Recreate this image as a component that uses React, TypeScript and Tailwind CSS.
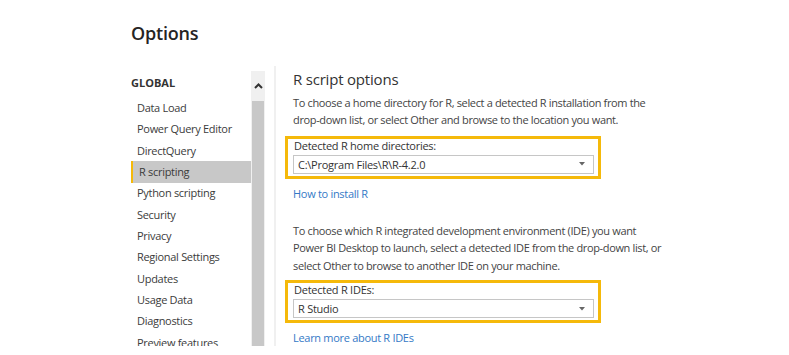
const NAV_ITEMS = [
  'Data Load',
  'Power Query Editor',
  'DirectQuery',
  'R scripting',
  'Python scripting',
  'Security',
  'Privacy',
  'Regional Settings',
  'Updates',
  'Usage Data',
  'Diagnostics',
  'Preview features',
];

function Dropdown({ value }: { value: string }) {
  return (
    <div className="ml-[5px] mr-[4px] h-[19px] border border-[#c6c6c6] bg-white flex items-center pl-[4px] pr-[8px]">
      <span className="flex-1 text-[11px] leading-[17px] tracking-[-0.25px] text-[#333]">{value}</span>
      <svg width="6" height="4" viewBox="0 0 6 4" className="text-[#666]">
        <path d="M0 0h6L3 3.5z" fill="currentColor" />
      </svg>
    </div>
  );
}

function PickerBox({ label, value }: { label: string; value: string }) {
  return (
    <div className="w-[316px] h-[43px] border-[3px] border-[#f5b90a]">
      <div className="pl-[6px] text-[11px] leading-[14px] tracking-[-0.25px] text-[#333]">{label}</div>
      <div className="mt-[2px]">
        <Dropdown value={value} />
      </div>
    </div>
  );
}

export default function App() {
  return (
    <div className="w-[789px] h-[355px] bg-white overflow-hidden font-['Open_Sans',sans-serif]">
      {/* Title */}
      <div className="pl-[131px] pt-[20px] h-[66px]">
        <h1 className="text-[18px] leading-[26px] font-semibold tracking-[-0.2px] text-[#252423]">Options</h1>
      </div>

      <div className="flex h-[280px] pl-[131px] overflow-hidden">
        {/* Nav */}
        <nav className="w-[120px] pt-[10px]">
          <div className="h-[14px] text-[11px] leading-[14px] font-bold text-[#333]">GLOBAL</div>
          <div className="mt-[7.5px]">
            {NAV_ITEMS.map((item) => (
              <div
                key={item}
                className={`h-[21.33px] flex items-center pl-[6px] text-[11px] tracking-[-0.3px] text-[#3b3b3b] ${
                  item === 'R scripting' ? 'bg-[#c8c8c8] border-l-[2px] border-[#f5b90a] pl-[4px]' : ''
                }`}
              >
                {item}
              </div>
            ))}
          </div>
        </nav>

        {/* Scrollbar */}
        <div className="w-[14px] mt-[5px] bg-[#f0f0f0] flex flex-col">
          <div className="h-[30px] flex items-center justify-center">
            <svg width="9" height="6" viewBox="0 0 9 6">
              <path d="M1 5l3.5-3.5L8 5" stroke="#333" strokeWidth="2" fill="none" />
            </svg>
          </div>
          <div className="flex-1 mx-[1px] bg-[#c8c8c8]" />
        </div>

        {/* Separator */}
        <div className="ml-[9px] w-[2px] bg-[#f0f0f0]" />

        {/* Content */}
        <div className="ml-[9px] flex-1 text-[#444]">
          <h2 className="pl-[8px] pt-[3px] text-[15px] leading-[20px] tracking-[-0.2px] text-[#333]">R script options</h2>
          <p className="pl-[8px] mt-[5px] text-[11px] leading-[17.3px] tracking-[-0.35px]">
            To choose a home directory for R, select a detected R installation from the
            <br />
            drop-down list, or select Other and browse to the location you want.
          </p>
          <div className="mt-[7px]">
            <PickerBox label="Detected R home directories:" value="C:\Program Files\R\R-4.2.0" />
          </div>
          <div className="pl-[8px] mt-[6px] text-[11px] leading-[17px] tracking-[-0.3px] text-[#3479c6]">How to install R</div>
          <p className="pl-[8px] mt-[20px] text-[11px] leading-[17.5px] tracking-[-0.35px]">
            To choose which R integrated development environment (IDE) you want
            <br />
            Power BI Desktop to launch, select a detected IDE from the drop-down list, or
            <br />
            select Other to browse to another IDE on your machine.
          </p>
          <div className="mt-[6px]">
            <PickerBox label="Detected R IDEs:" value="R Studio" />
          </div>
          <div className="pl-[8px] mt-[6px] text-[11px] leading-[17px] tracking-[-0.3px] text-[#3479c6]">Learn more about R IDEs</div>
        </div>
      </div>
    </div>
  );
}
